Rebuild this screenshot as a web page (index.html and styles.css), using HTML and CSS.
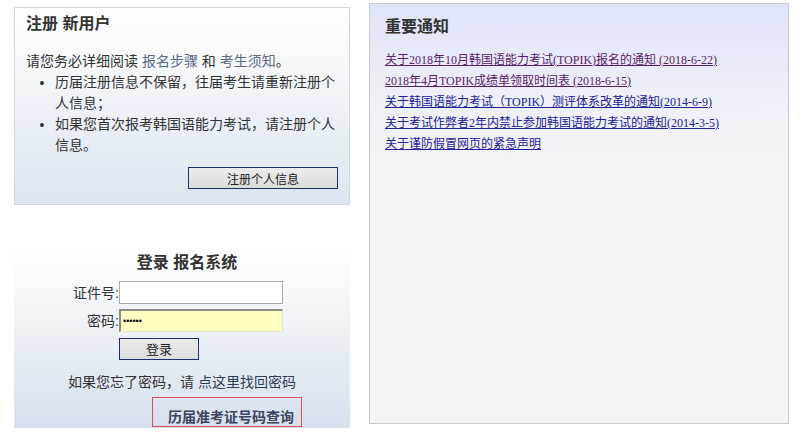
FILE: index.html
```html
<!DOCTYPE html>
<html lang="zh-CN">
<head>
    <meta charset="UTF-8">
    <title>韩国语能力考试 报名系统</title>
    <link rel="stylesheet" href="styles.css">
</head>
<body>
    <div class="page">
        <div class="side">
            <!-- 注册 -->
            <div class="reg-box">
                <h2>注册 新用户</h2>
                <p class="intro">请您务必详细阅读 <a href="#" class="soft">报名步骤</a> 和 <a href="#" class="soft">考生须知</a>。</p>
                <ul>
                    <li>历届注册信息不保留，往届考生请重新注册个人信息；</li>
                    <li>如果您首次报考韩国语能力考试，请注册个人信息。</li>
                </ul>
                <div class="reg-actions">
                    <button class="btn btn-wide">注册个人信息</button>
                </div>
            </div>

            <!-- 登录 -->
            <div class="login-box">
                <h2>登录 报名系统</h2>
                <div class="form-row">
                    <label for="idno">证件号:</label>
                    <input type="text" id="idno">
                </div>
                <div class="form-row">
                    <label for="pwd">密码:</label>
                    <input type="password" id="pwd" class="autofill" value="123456">
                </div>
                <div class="form-row">
                    <span class="spacer"></span>
                    <button class="btn btn-login">登录</button>
                </div>
                <p class="forgot">如果您忘了密码，请 <a href="#">点这里找回密码</a></p>
                <div class="history-wrap">
                    <a href="#" class="history">历届准考证号码查询</a>
                </div>
            </div>
        </div>

        <!-- 通知 -->
        <div class="notice-box">
            <h2>重要通知</h2>
            <ul class="notices">
                <li><a href="#" class="visited">关于2018年10月韩国语能力考试(TOPIK)报名的通知 (2018-6-22)</a></li>
                <li><a href="#" class="visited">2018年4月TOPIK成绩单领取时间表 (2018-6-15)</a></li>
                <li><a href="#">关于韩国语能力考试（TOPIK）测评体系改革的通知(2014-6-9)</a></li>
                <li><a href="#">关于考试作弊者2年内禁止参加韩国语能力考试的通知(2014-3-5)</a></li>
                <li><a href="#">关于谨防假冒网页的紧急声明</a></li>
            </ul>
        </div>
    </div>
</body>
</html>
```

FILE: styles.css
```css
body {
    margin: 0;
    background: #fff;
    color: #333;
    font-family: "Liberation Sans", "Noto Sans CJK SC", sans-serif;
}
.page {
    display: flex;
    align-items: flex-start;
    padding: 3px 0 0 14px;
    gap: 19px;
}
.side {
    width: 336px;
    padding-top: 4px;
}
h2 {
    margin: 0;
    font-size: 16px;
    font-weight: bold;
    line-height: 22px;
}

/* 注册 */
.reg-box {
    border: 1px solid #d3d7dd;
    padding: 5px 11px 0;
    box-sizing: border-box;
    height: 198px;
    background: linear-gradient(#ffffff 0%, #f3f6fa 35%, #dce5f0 100%);
}
.reg-box .intro {
    margin: 15px 0 0;
    font-size: 14px;
    line-height: 22px;
}
a.soft {
    color: #5a6b85;
    text-decoration: none;
}
.reg-box ul {
    margin: 0;
    padding-left: 29px;
    font-size: 14px;
    line-height: 21px;
}
.reg-actions {
    display: flex;
    justify-content: flex-end;
    margin-top: 11px;
}
.btn {
    font-family: "Liberation Sans", "Noto Sans CJK SC", sans-serif;
    font-size: 12px;
    color: #222;
    height: 22px;
    padding: 0;
    border: 1px solid #1d2f68;
    background: linear-gradient(#ececec, #dcdcdc);
    cursor: pointer;
}
.btn-wide {
    width: 150px;
}
.btn-login {
    width: 80px;
    font-size: 13px;
}

/* 登录 */
.login-box {
    margin-top: 46px;
    height: 177px;
    padding-top: 1px;
    box-sizing: border-box;
    background: linear-gradient(#ffffff 0%, #f1f4f8 35%, #d6e0ec 100%);
}
.login-box h2 {
    text-align: center;
    padding-left: 10px;
    margin-bottom: 7px;
}
.form-row {
    display: flex;
    align-items: center;
    height: 23px;
    padding-left: 44px;
    margin-bottom: 5px;
}
.form-row label,
.form-row .spacer {
    width: 61px;
    text-align: right;
    font-size: 14px;
    line-height: 20px;
}
.form-row input {
    width: 164px;
    height: 23px;
    box-sizing: border-box;
    border: 1px solid #a9a9a9;
    background: #fff;
    margin: 0;
    padding: 0 2px;
    font-size: 9px;
}
.form-row input.autofill {
    background: #ffffc2;
    border-color: #8a8a8a #e4e4d0 #e4e4d0 #8a8a8a;
    border-width: 2px 1px 1px 2px;
}
.forgot {
    margin: 12px 0 0;
    text-align: center;
    font-size: 14px;
    line-height: 20px;
}
.forgot a {
    color: #2f3b57;
    text-decoration: none;
}
.history-wrap {
    display: flex;
    justify-content: flex-end;
    padding-right: 48px;
    margin-top: 5px;
}
.history {
    display: block;
    width: 150px;
    height: 30px;
    box-sizing: border-box;
    border: 1px solid #d8505c;
    padding: 10px 7px 0 0;
    text-align: right;
    font-size: 14px;
    line-height: 18px;
    font-weight: bold;
    color: #3b4460;
    text-decoration: none;
}

/* 通知 */
.notice-box {
    width: 420px;
    height: 421px;
    box-sizing: border-box;
    border: 1px solid #c9c9cd;
    padding: 12px 15px 0;
    background: linear-gradient(#dfe3f8 0px, #eef0f8 90px, #f4f4f6 180px, #f4f4f6 100%);
}
.notices {
    list-style: none;
    margin: 12px 0 0;
    padding: 0;
    font-family: "Liberation Serif", "Noto Sans CJK SC", serif;
    font-size: 12px;
    line-height: 21px;
}
.notices a {
    color: #20209a;
}
.notices a.visited {
    color: #5a1c6e;
}
```
